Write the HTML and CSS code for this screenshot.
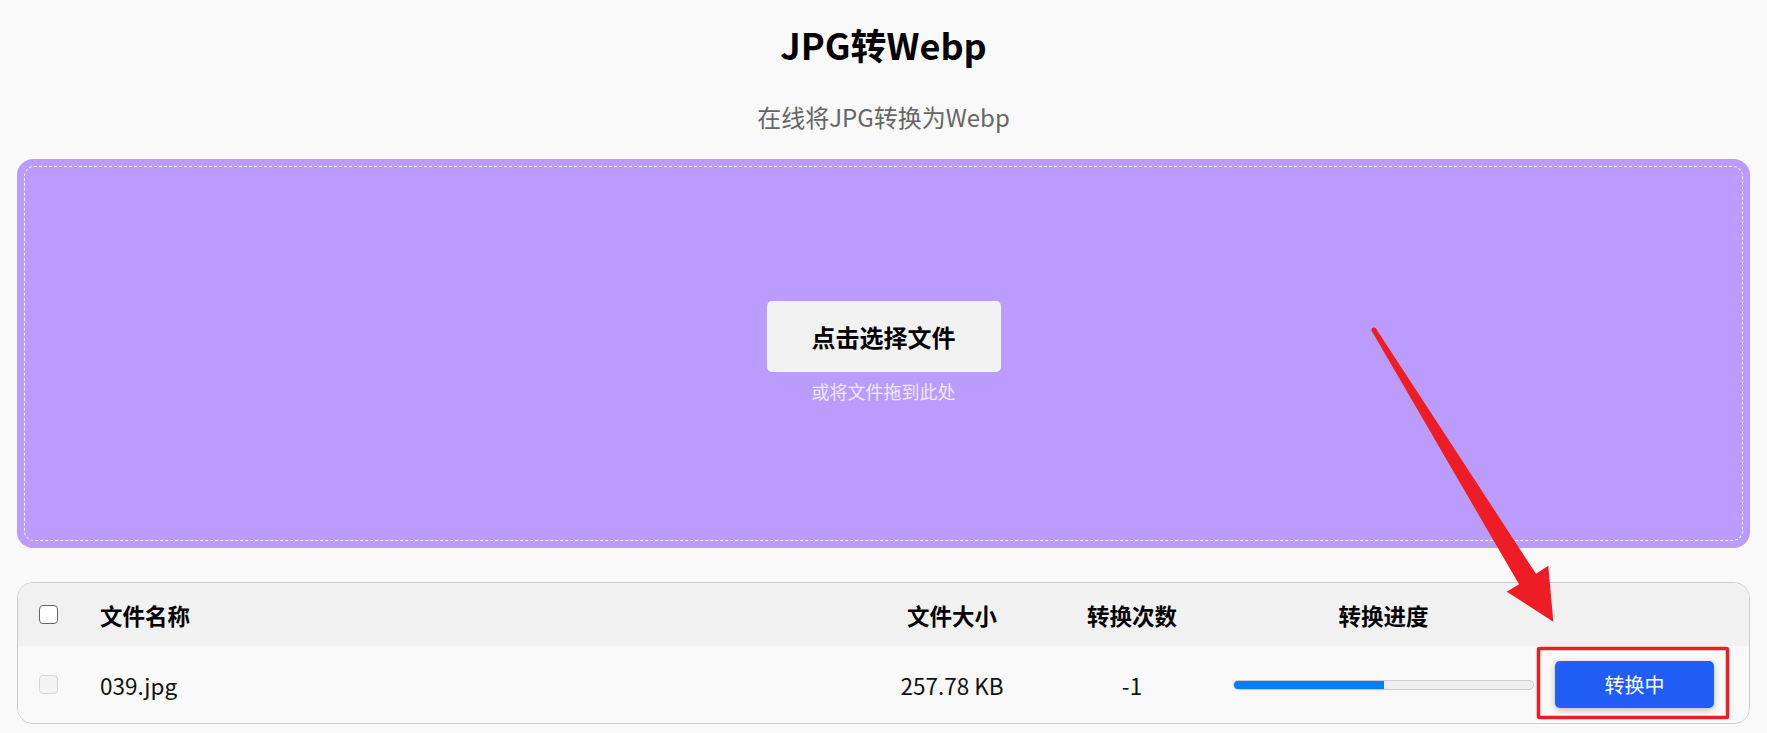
FILE: index.html
```html
<!DOCTYPE html>
<html lang="zh-CN">
<head>
    <meta charset="UTF-8">
    <meta name="viewport" content="width=device-width, initial-scale=1.0">
    <title>JPG转Webp</title>
    <link rel="stylesheet" href="styles.css">
</head>
<body>
    <div class="page">
        <!-- 标题 -->
        <h1 class="title">JPG转Webp</h1>
        <p class="subtitle">在线将JPG转换为Webp</p>

        <!-- 上传区域 -->
        <div class="drop">
            <div class="drop-inner">
                <button class="pick-btn">点击选择文件</button>
                <span class="drop-tip">或将文件拖到此处</span>
            </div>
        </div>

        <!-- 文件列表 -->
        <div class="file-table">
            <div class="row head">
                <div class="cell c-check"><span class="check"></span></div>
                <div class="cell c-name">文件名称</div>
                <div class="cell c-mid">文件大小</div>
                <div class="cell c-mid">转换次数</div>
                <div class="cell c-mid">转换进度</div>
                <div class="cell c-act"></div>
            </div>
            <div class="row">
                <div class="cell c-check"><span class="check disabled"></span></div>
                <div class="cell c-name">039.jpg</div>
                <div class="cell c-mid">257.78 KB</div>
                <div class="cell c-mid">-1</div>
                <div class="cell c-mid">
                    <div class="progress"><div class="bar" style="width: 50%"></div></div>
                </div>
                <div class="cell c-act"><button class="convert-btn">转换中</button></div>
            </div>
        </div>

        <!-- 标注 -->
        <svg class="annot" width="1767" height="733" viewBox="0 0 1767 733">
            <rect x="1538.5" y="648.5" width="189" height="69" rx="1" fill="none" stroke="#ee1c25" stroke-width="3.5"/>
            <polygon fill="#ee1c25" points="1376.1,328.7 1536.0,573.8 1548.3,565.7 1553.3,621.7 1506.7,591.7 1519.0,584.2 1371.9,331.3"/>
            <circle cx="1374" cy="330" r="2.5" fill="#ee1c25"/>
        </svg>
    </div>
</body>
</html>
```

FILE: styles.css
```css
body,h1,p{
    margin: 0;
    padding: 0;
}
body{
    background: #f9f9f9;
    font-family: "Noto Sans CJK SC", "Noto Sans", sans-serif;
    color: #111;
}
.page{
    position: relative;
    padding: 19px 17px 0;
}
.title{
    text-align: center;
    font-size: 36px;
    font-weight: bold;
    line-height: 50px;
    color: #000;
}
.subtitle{
    margin-top: 32px;
    text-align: center;
    font-size: 24px;
    line-height: 32px;
    color: #666;
}
/* 上传区域 */
.drop{
    margin-top: 26px;
    height: 389px;
    box-sizing: border-box;
    padding: 7px;
    background: #b99cfe;
    border-radius: 16px;
}
.drop-inner{
    height: 100%;
    box-sizing: border-box;
    border: 1px dashed rgba(255,255,255,0.9);
    border-radius: 10px;
    display: flex;
    flex-direction: column;
    align-items: center;
    justify-content: center;
}
.pick-btn{
    width: 234px;
    height: 71px;
    border: none;
    border-radius: 5px;
    background: #f2f2f2;
    font-family: inherit;
    font-size: 24px;
    font-weight: bold;
    color: #000;
}
.drop-tip{
    margin-top: 4px;
    font-size: 18px;
    line-height: 30px;
    color: #efe8ff;
}
/* 列表 */
.file-table{
    margin-top: 34px;
    border: 1px solid #ccc;
    border-radius: 16px;
    overflow: hidden;
}
.row{
    display: grid;
    grid-template-columns: 64px 1fr 168px 192px 311px 210px;
    height: 77px;
    align-items: center;
    font-size: 22.5px;
    background: #f9f9f9;
}
.row.head{
    height: 63px;
    background: #f1f1f1;
    font-weight: bold;
    color: #000;
}
.c-check{
    padding-left: 21px;
    display: flex;
}
.c-name{
    padding-left: 18px;
}
.c-mid{
    text-align: center;
    display: flex;
    justify-content: center;
}
.c-act{
    padding-left: 16px;
    display: flex;
}
.check{
    width: 17px;
    height: 17px;
    border: 1.5px solid #666;
    border-radius: 4px;
    background: #fff;
}
.check.disabled{
    border-color: #d6d6d6;
    background: #f3f3f3;
}
.progress{
    width: 299px;
    height: 8px;
    border: 1px solid #ccc;
    border-radius: 5px;
    background: #efefef;
    overflow: hidden;
}
.progress .bar{
    height: 100%;
    background: #0a7cff;
}
.convert-btn{
    width: 159px;
    height: 47px;
    border: none;
    border-radius: 5px;
    background: #215ef6;
    color: #fff;
    font-family: inherit;
    font-size: 20px;
    box-shadow: 0 2px 6px rgba(0,0,0,0.25);
}
.annot{
    position: absolute;
    top: 0;
    left: 0;
    pointer-events: none;
}
```
